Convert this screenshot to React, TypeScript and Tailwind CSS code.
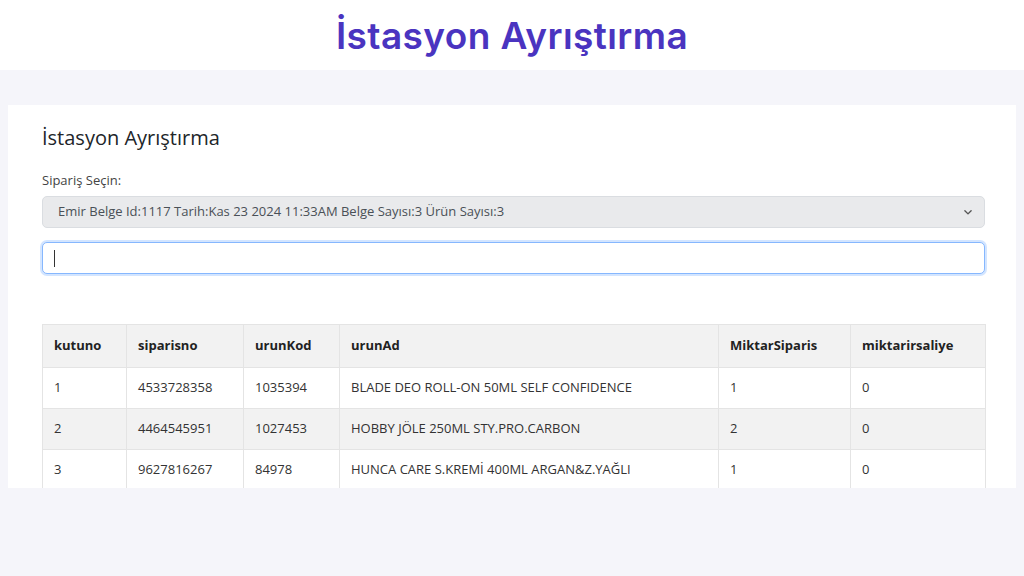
import React from 'react';

const ROWS = [
  { kutuno: '1', siparisno: '4533728358', urunKod: '1035394', urunAd: 'BLADE DEO ROLL-ON 50ML SELF CONFIDENCE', miktarSiparis: '1', miktarIrsaliye: '0' },
  { kutuno: '2', siparisno: '4464545951', urunKod: '1027453', urunAd: 'HOBBY JÖLE 250ML STY.PRO.CARBON', miktarSiparis: '2', miktarIrsaliye: '0' },
  { kutuno: '3', siparisno: '9627816267', urunKod: '84978', urunAd: 'HUNCA CARE S.KREMİ 400ML ARGAN&Z.YAĞLI', miktarSiparis: '1', miktarIrsaliye: '0' },
];

const COLS = ['w-[84px]', 'w-[117px]', 'w-[96px]', 'w-[379px]', 'w-[132px]', 'w-[135px]'];

export default function App() {
  return (
    <div className="min-h-[576px] bg-[#f5f5fa] font-['Open_Sans','Noto_Sans',sans-serif]">
      <header className="h-[70px] bg-white flex items-center justify-center">
        <h1 className="text-[37px] font-semibold tracking-[0.4px] text-[#4a34c0] font-['Inter',sans-serif] leading-none">
          İstasyon Ayrıştırma
        </h1>
      </header>

      <div className="pt-[35px] px-2">
        <div className="bg-white h-[383px] overflow-hidden pl-[34px] pr-[31px] pt-[20px]">
          <h2 className="text-[20px] font-medium text-[#212529] leading-[26px]">İstasyon Ayrıştırma</h2>

          <label className="block mt-[20px] text-[13px] text-[#444] leading-[18px]">Sipariş Seçin:</label>

          <div className="mt-[7px] h-[32px] rounded-[5px] border border-[#dadde1] bg-[#e9eaec] flex items-center justify-between pl-[15px] pr-[11px] text-[13px] text-[#495057]">
            <span>Emir Belge Id:1117 Tarih:Kas 23 2024 11:33AM Belge Sayısı:3 Ürün Sayısı:3</span>
            <svg width="10" height="10" viewBox="0 0 16 16" fill="none" stroke="#555" strokeWidth="2.2" strokeLinecap="round" strokeLinejoin="round">
              <path d="M3 6l5 5 5-5" />
            </svg>
          </div>

          <div className="mt-[14px] h-[32px] rounded-[5px] border border-[#86b7fe] shadow-[0_0_0_2px_rgba(13,110,253,0.18)] bg-white flex items-center pl-[11px]">
            <span className="block w-px h-[17px] bg-[#333]" />
          </div>

          <table className="mt-[50px] w-[943px] border-collapse table-fixed text-[13px] text-[#333]">
            <colgroup>
              {COLS.map((c, i) => (
                <col key={i} className={c} />
              ))}
            </colgroup>
            <thead>
              <tr className="bg-[#f2f2f2] h-[43px]">
                {['kutuno', 'siparisno', 'urunKod', 'urunAd', 'MiktarSiparis', 'miktarirsaliye'].map((h) => (
                  <th key={h} className="text-left font-bold text-[#222] px-[11px] border border-[#e4e4e4]">
                    {h}
                  </th>
                ))}
              </tr>
            </thead>
            <tbody>
              {ROWS.map((r, i) => (
                <tr key={r.kutuno} className={`h-[41px] ${i % 2 === 1 ? 'bg-[#f2f2f2]' : 'bg-white'}`}>
                  {[r.kutuno, r.siparisno, r.urunKod, r.urunAd, r.miktarSiparis, r.miktarIrsaliye].map((v, j) => (
                    <td key={j} className="px-[11px] border border-[#e4e4e4]">
                      {v}
                    </td>
                  ))}
                </tr>
              ))}
            </tbody>
          </table>
        </div>
      </div>
    </div>
  );
}
